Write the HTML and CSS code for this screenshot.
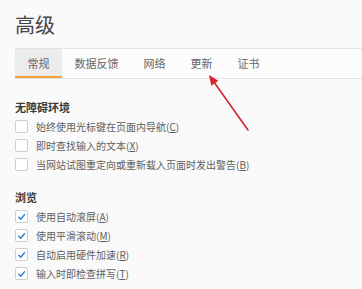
FILE: index.html
```html
<!DOCTYPE html>
<html lang="zh-CN">
<head>
<meta charset="utf-8">
<link rel="stylesheet" href="styles.css">
</head>
<body>
<div class="page">
  <h1 class="title">高级</h1>
  <div class="tabs">
    <div class="tab active">常规</div>
    <div class="tab">数据反馈</div>
    <div class="tab">网络</div>
    <div class="tab">更新</div>
    <div class="tab">证书</div>
  </div>

  <section class="group first">
    <h2 class="group-title">无障碍环境</h2>
    <div class="row"><span class="box"></span><span class="label">始终使用光标键在页面内导航(<u>C</u>)</span></div>
    <div class="row"><span class="box"></span><span class="label">即时查找输入的文本(<u>X</u>)</span></div>
    <div class="row"><span class="box"></span><span class="label">当网站试图重定向或重新载入页面时发出警告(<u>B</u>)</span></div>
  </section>

  <section class="group">
    <h2 class="group-title">浏览</h2>
    <div class="row"><span class="box checked"><svg viewBox="0 0 12 12" width="12" height="12"><path d="M3 6.3 L5.2 8.5 L9.3 3.6" fill="none" stroke="#2a7fd4" stroke-width="1.5" stroke-linecap="round" stroke-linejoin="round"/></svg></span><span class="label">使用自动滚屏(<u>A</u>)</span></div>
    <div class="row"><span class="box checked"><svg viewBox="0 0 12 12" width="12" height="12"><path d="M3 6.3 L5.2 8.5 L9.3 3.6" fill="none" stroke="#2a7fd4" stroke-width="1.5" stroke-linecap="round" stroke-linejoin="round"/></svg></span><span class="label">使用平滑滚动(<u>M</u>)</span></div>
    <div class="row"><span class="box checked"><svg viewBox="0 0 12 12" width="12" height="12"><path d="M3 6.3 L5.2 8.5 L9.3 3.6" fill="none" stroke="#2a7fd4" stroke-width="1.5" stroke-linecap="round" stroke-linejoin="round"/></svg></span><span class="label">自动启用硬件加速(<u>R</u>)</span></div>
    <div class="row"><span class="box checked"><svg viewBox="0 0 12 12" width="12" height="12"><path d="M3 6.3 L5.2 8.5 L9.3 3.6" fill="none" stroke="#2a7fd4" stroke-width="1.5" stroke-linecap="round" stroke-linejoin="round"/></svg></span><span class="label">输入时即检查拼写(<u>T</u>)</span></div>
  </section>
</div>

<svg class="arrow" width="362" height="289" viewBox="0 0 362 289">
  <line x1="248" y1="130" x2="214.8" y2="83.2" stroke="#d8242b" stroke-width="1.6" stroke-linecap="round"/>
  <polygon points="209,75 218.3,80.7 211.3,85.7" fill="#d8242b"/>
</svg>
</body>
</html>
```

FILE: styles.css
```css
html, body {
  margin: 0;
  padding: 0;
  background: #fafafa;
}

body {
  font-family: "Noto Sans CJK SC", "Noto Sans", sans-serif;
  color: #555;
  width: 362px;
  height: 289px;
  overflow: hidden;
  position: relative;
}

.page {
  padding: 11px 0 0 15px;
}

.title {
  margin: 0;
  font-size: 20px;
  line-height: 27px;
  font-weight: normal;
  color: #454545;
}

.tabs {
  margin-top: 10px;
  display: flex;
  height: 29px;
  border-top: 1px solid #e3e3e3;
  border-bottom: 1px solid #e3e3e3;
  background: #fcfcfc;
}

.tab {
  padding: 0 12.5px;
  font-size: 11px;
  line-height: 29px;
  color: #666;
  white-space: nowrap;
}

.tab.active {
  background: #ececec;
  box-shadow: inset 0 -2px 0 #f0a234;
}

.group {
  margin-top: 16px;
}

.group.first {
  margin-top: 21px;
}

.group-title {
  margin: 0 0 3px;
  font-size: 11px;
  line-height: 14px;
  font-weight: bold;
  color: #3a3a3a;
}

.row {
  display: flex;
  align-items: center;
  height: 19px;
}

.box {
  box-sizing: border-box;
  width: 13px;
  height: 13px;
  border: 1px solid #cfcfcf;
  border-radius: 2px;
  background: #fff;
  display: flex;
  align-items: center;
  justify-content: center;
  flex: none;
}

.box svg {
  display: block;
}

.label {
  margin-left: 8px;
  font-size: 10px;
  line-height: 14px;
  color: #606060;
  white-space: nowrap;
}

.arrow {
  position: absolute;
  left: 0;
  top: 0;
  pointer-events: none;
}
```
